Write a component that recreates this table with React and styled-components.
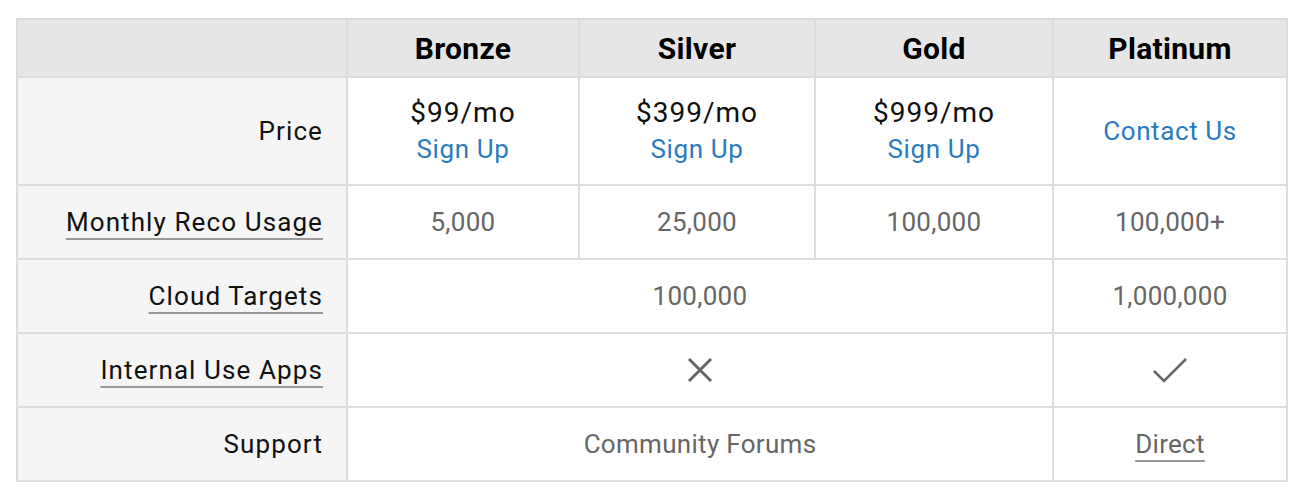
import React from "react";
import styled, { createGlobalStyle } from "styled-components";

const Global = createGlobalStyle`
  html, body { margin: 0; padding: 0; background: #fff; }
  body { font-family: "Roboto", "Liberation Sans", sans-serif; }
`;

const Page = styled.div`
  padding: 18px 12px 8px 16px;
`;

const Table = styled.div`
  display: grid;
  width: 1268px;
  grid-template-columns: 328px 230px 234px 236px 232px;
  grid-template-rows: 56px 106px 72px 72px 72px 72px;
  gap: 2px;
  border: 2px solid #dcdcdc;
  background: #dcdcdc;
`;

const Cell = styled.div`
  display: flex;
  flex-direction: column;
  align-items: center;
  justify-content: center;
  background: #fff;
  color: #666;
  font-size: 26px;
  letter-spacing: 0.3px;
  grid-column: ${(p) => p.$span || "auto"};
`;

const HeadCell = styled(Cell)`
  background: #e6e6e6;
  color: #000;
  font-weight: 700;
  font-size: 30px;
  letter-spacing: 0.3px;
`;

const Label = styled(Cell)`
  background: #f5f5f5;
  align-items: flex-end;
  padding-right: 23px;
  color: #111;
  letter-spacing: 1.1px;
`;

const Term = styled.span`
  text-decoration: underline;
  text-decoration-color: #999;
  text-decoration-thickness: 2px;
  text-underline-offset: 7px;
`;

const Price = styled.div`
  color: #111;
  font-size: 28px;
  letter-spacing: 1px;
  line-height: 36px;
`;

const Link = styled.a`
  color: #2a7bbf;
  text-decoration: none;
  font-size: 26px;
  letter-spacing: 0.6px;
  line-height: 36px;
`;

const Icon = styled.svg`
  width: ${(p) => p.$w}px;
  height: ${(p) => p.$h}px;
  stroke: #666;
  fill: none;
  stroke-width: ${(p) => p.$sw};
`;

const tiers = [
  { name: "Bronze", price: "$99/mo", usage: "5,000" },
  { name: "Silver", price: "$399/mo", usage: "25,000" },
  { name: "Gold", price: "$999/mo", usage: "100,000" },
];

export default function App() {
  return (
    <Page>
      <Global />
      <Table>
        <HeadCell />
        {tiers.map((t) => (
          <HeadCell key={t.name}>{t.name}</HeadCell>
        ))}
        <HeadCell>Platinum</HeadCell>

        <Label>Price</Label>
        {tiers.map((t) => (
          <Cell key={t.name}>
            <Price>{t.price}</Price>
            <Link href="#">Sign Up</Link>
          </Cell>
        ))}
        <Cell>
          <Link href="#">Contact Us</Link>
        </Cell>

        <Label><Term>Monthly Reco Usage</Term></Label>
        {tiers.map((t) => (
          <Cell key={t.name}>{t.usage}</Cell>
        ))}
        <Cell>100,000+</Cell>

        <Label><Term>Cloud Targets</Term></Label>
        <Cell $span="span 3">100,000</Cell>
        <Cell>1,000,000</Cell>

        <Label><Term>Internal Use Apps</Term></Label>
        <Cell $span="span 3">
          <Icon viewBox="0 0 26 26" $w={26} $h={26} $sw={3}>
            <path d="M2 2 L24 24 M24 2 L2 24" />
          </Icon>
        </Cell>
        <Cell>
          <Icon viewBox="0 0 36 28" $w={36} $h={28} $sw={2.5}>
            <path d="M2 15 L12 25 L34 3" />
          </Icon>
        </Cell>

        <Label>Support</Label>
        <Cell $span="span 3">Community Forums</Cell>
        <Cell><Term>Direct</Term></Cell>
      </Table>
    </Page>
  );
}
